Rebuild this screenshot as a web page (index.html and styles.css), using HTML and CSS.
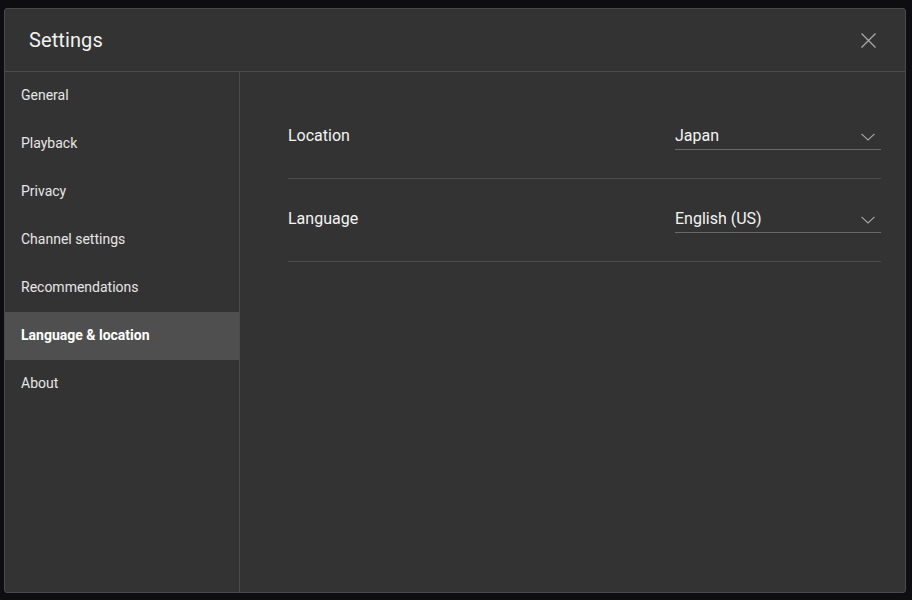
FILE: index.html
```html
<!DOCTYPE html>
<html lang="en">
<head>
<meta charset="utf-8">
<title>Settings</title>
<link rel="stylesheet" href="styles.css">
</head>
<body>
<div class="page">
  <div class="dialog">
    <div class="header">
      <h1 class="title">Settings</h1>
      <button class="close" aria-label="Close">
        <svg width="15" height="15" viewBox="0 0 15 15"><path d="M0.5 0.5 L14.5 14.5 M14.5 0.5 L0.5 14.5" stroke="#a8a8a8" stroke-width="1.3" fill="none"/></svg>
      </button>
    </div>
    <div class="body">
      <nav class="sidebar">
        <div class="nav-item">General</div>
        <div class="nav-item">Playback</div>
        <div class="nav-item">Privacy</div>
        <div class="nav-item">Channel settings</div>
        <div class="nav-item">Recommendations</div>
        <div class="nav-item active">Language &amp; location</div>
        <div class="nav-item">About</div>
      </nav>
      <main class="content">
        <div class="row">
          <div class="label">Location</div>
          <div class="select">
            <span class="value">Japan</span>
            <svg class="chev" width="14" height="8" viewBox="0 0 14 8"><path d="M0.5 0.8 L7 7 L13.5 0.8" stroke="#a8a8a8" stroke-width="1.1" fill="none"/></svg>
          </div>
        </div>
        <div class="row">
          <div class="label">Language</div>
          <div class="select">
            <span class="value">English (US)</span>
            <svg class="chev" width="14" height="8" viewBox="0 0 14 8"><path d="M0.5 0.8 L7 7 L13.5 0.8" stroke="#a8a8a8" stroke-width="1.1" fill="none"/></svg>
          </div>
        </div>
      </main>
    </div>
  </div>
</div>
</body>
</html>
```

FILE: styles.css
```css
* { box-sizing: border-box; }
html, body {
  margin: 0;
  padding: 0;
  height: 100%;
}
body {
  background: #0e0e10;
  font-family: Roboto, "Liberation Sans", Arial, sans-serif;
  color: #fff;
  overflow: hidden;
}
.page {
  padding: 8px 0 0 4px;
}
.dialog {
  width: 902px;
  height: 585px;
  background: #333333;
  border: 1px solid #4a4a4a;
  border-radius: 3px;
  display: flex;
  flex-direction: column;
}
.header {
  height: 63px;
  flex: none;
  display: flex;
  align-items: center;
  justify-content: space-between;
  padding: 0 29px 0 24px;
  border-bottom: 1px solid #4b4b4b;
}
.title {
  margin: 0;
  font-size: 20px;
  font-weight: 400;
  color: #f1f1f1;
  letter-spacing: 0.1px;
}
.close {
  background: none;
  border: none;
  padding: 0;
  width: 15px;
  height: 15px;
  display: flex;
  cursor: pointer;
  margin-top: 1px;
}
.body {
  flex: 1;
  display: flex;
  min-height: 0;
}
.sidebar {
  width: 235px;
  flex: none;
  border-right: 1px solid #4b4b4b;
}
.nav-item {
  height: 48px;
  display: flex;
  align-items: center;
  padding: 0 0 2px 16px;
  font-size: 14px;
  color: #e6e6e6;
}
.nav-item.active {
  background: #4f4f4f;
  font-weight: 700;
  color: #fff;
}
.content {
  flex: 1;
  padding: 24px 24px 0 48px;
}
.row {
  display: flex;
  align-items: center;
  justify-content: space-between;
  padding: 28px 0;
  border-bottom: 1px solid #4b4b4b;
}
.label {
  font-size: 16px;
  color: #f4f4f4;
  margin-bottom: 3px;
}
.select {
  width: 206px;
  display: flex;
  align-items: center;
  justify-content: space-between;
  line-height: 24px;
  padding: 0 6px 1px 0;
  border-bottom: 1px solid #6a6a6a;
}
.value {
  font-size: 16px;
  color: #f4f4f4;
}
.chev {
  display: block;
  margin-top: 1px;
}
```
